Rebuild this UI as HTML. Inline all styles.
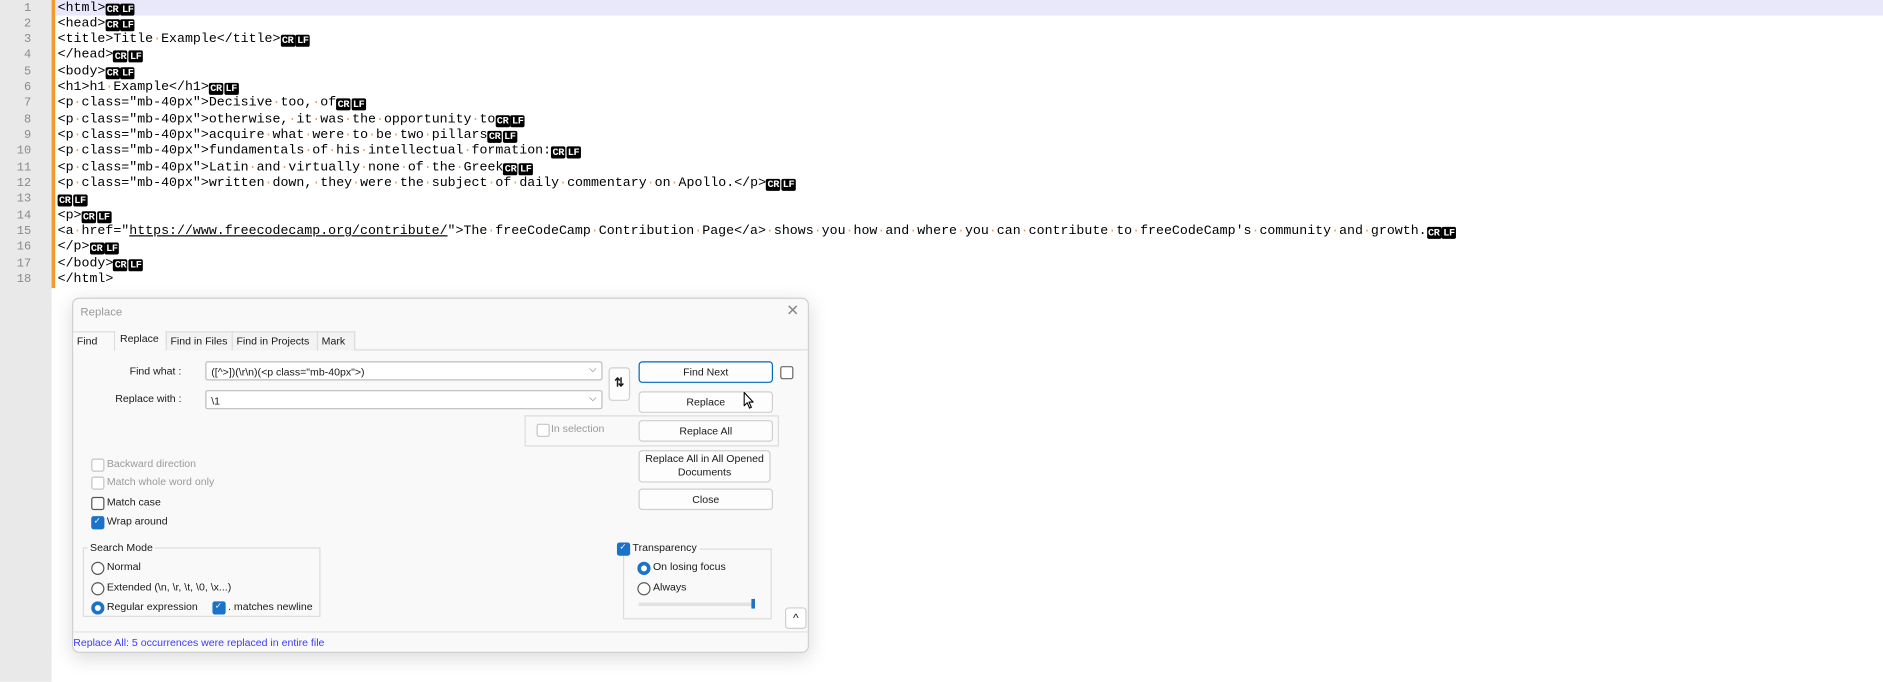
<!DOCTYPE html>
<html><head><meta charset="utf-8"><style>
html,body{margin:0;padding:0;width:1883px;height:681px;overflow:hidden;background:#fff}
#s{position:absolute;left:0;top:0;width:1569px;height:568px;transform:scale(1.2003);transform-origin:0 0;font-family:"Liberation Sans",sans-serif}
.g{position:absolute;left:0;top:0;width:43px;height:568px;background:#e9e9e9}
.ob{position:absolute;left:43px;top:0;width:3px;height:240px;background:#f39a2e}
.hl{position:absolute;left:46px;top:0;right:0;height:13.3px;background:#e8e8fa}
.ln{position:absolute;left:0;top:0.5px;width:26px;text-align:right;font:10px "Liberation Mono",monospace;color:#8a8a8a;line-height:13.33px}
.code{position:absolute;left:48px;top:0.5px;font:11.05px "Liberation Mono",monospace;line-height:13.33px;white-space:pre;color:#000}
.code i{font-style:normal;color:#e8a050}
.c{display:inline-block;width:12px;text-align:center;background:#000;color:#fff;font-size:8.5px;line-height:10px;border-radius:1.5px;margin-right:0.7px;vertical-align:-1px;font-weight:bold;letter-spacing:-0.3px}
.dlg{position:absolute;left:60px;top:248px;width:612px;height:294px;background:#f9f9f9;border:1px solid #d0d0d0;border-radius:6px;box-shadow:0 4px 16px rgba(0,0,0,.15);font-size:8.8px;color:#1a1a1a}
.a{position:absolute;white-space:nowrap}
.tab{position:absolute;top:27px;height:15px;border:1px solid #dcdcdc;border-bottom:none;background:#f3f3f3;line-height:15px;padding:0 3px}
.btn{position:absolute;left:471px;width:110px;height:16px;border:1px solid #cfcfcf;border-radius:3px;background:#fdfdfd;text-align:center;line-height:16px}
.inp{position:absolute;left:110px;height:16px;border:1px solid #bdbdbd;border-radius:2px;background:#fff;line-height:16px;padding-left:4px;box-sizing:border-box;width:331px}
.inp:after{content:"⌵";position:absolute;right:4px;top:-2px;color:#666;font-size:8px}
.cb{position:absolute;width:9px;height:9px;border:1px solid #555;border-radius:2px;background:#fff}
.cb.d{border-color:#c4c4c4}
.cb.k{background:#1a73c8;border-color:#1a73c8}
.cb.k:after{content:"✓";color:#fff;font-size:7px;position:absolute;left:1px;top:-1px}
.rd{position:absolute;width:9px;height:9px;border:1px solid #555;border-radius:50%;background:#fff}
.rd.k{border:3px solid #1a73c8;width:5px;height:5px}
.gb{position:absolute;border:1px solid #dcdcdc}
.dis{color:#9a9a9a}
</style></head><body><div id="s">
<div class="g"></div><div class="ob"></div><div class="hl"></div>
<div class="ln">1<br>2<br>3<br>4<br>5<br>6<br>7<br>8<br>9<br>10<br>11<br>12<br>13<br>14<br>15<br>16<br>17<br>18</div>
<div class="code">&lt;html&gt;<span class="c">CR</span><span class="c">LF</span>
&lt;head&gt;<span class="c">CR</span><span class="c">LF</span>
&lt;title&gt;Title<i>·</i>Example&lt;/title&gt;<span class="c">CR</span><span class="c">LF</span>
&lt;/head&gt;<span class="c">CR</span><span class="c">LF</span>
&lt;body&gt;<span class="c">CR</span><span class="c">LF</span>
&lt;h1&gt;h1<i>·</i>Example&lt;/h1&gt;<span class="c">CR</span><span class="c">LF</span>
&lt;p<i>·</i>class="mb-40px"&gt;Decisive<i>·</i>too,<i>·</i>of<span class="c">CR</span><span class="c">LF</span>
&lt;p<i>·</i>class="mb-40px"&gt;otherwise,<i>·</i>it<i>·</i>was<i>·</i>the<i>·</i>opportunity<i>·</i>to<span class="c">CR</span><span class="c">LF</span>
&lt;p<i>·</i>class="mb-40px"&gt;acquire<i>·</i>what<i>·</i>were<i>·</i>to<i>·</i>be<i>·</i>two<i>·</i>pillars<span class="c">CR</span><span class="c">LF</span>
&lt;p<i>·</i>class="mb-40px"&gt;fundamentals<i>·</i>of<i>·</i>his<i>·</i>intellectual<i>·</i>formation:<span class="c">CR</span><span class="c">LF</span>
&lt;p<i>·</i>class="mb-40px"&gt;Latin<i>·</i>and<i>·</i>virtually<i>·</i>none<i>·</i>of<i>·</i>the<i>·</i>Greek<span class="c">CR</span><span class="c">LF</span>
&lt;p<i>·</i>class="mb-40px"&gt;written<i>·</i>down,<i>·</i>they<i>·</i>were<i>·</i>the<i>·</i>subject<i>·</i>of<i>·</i>daily<i>·</i>commentary<i>·</i>on<i>·</i>Apollo.&lt;/p&gt;<span class="c">CR</span><span class="c">LF</span>
<span class="c">CR</span><span class="c">LF</span>
&lt;p&gt;<span class="c">CR</span><span class="c">LF</span>
&lt;a<i>·</i>href="<u>https://www.freecodecamp.org/contribute/</u>"&gt;The<i>·</i>freeCodeCamp<i>·</i>Contribution<i>·</i>Page&lt;/a&gt;<i>·</i>shows<i>·</i>you<i>·</i>how<i>·</i>and<i>·</i>where<i>·</i>you<i>·</i>can<i>·</i>contribute<i>·</i>to<i>·</i>freeCodeCamp's<i>·</i>community<i>·</i>and<i>·</i>growth.<span class="c">CR</span><span class="c">LF</span>
&lt;/p&gt;<span class="c">CR</span><span class="c">LF</span>
&lt;/body&gt;<span class="c">CR</span><span class="c">LF</span>
&lt;/html&gt;</div>

<div class="dlg">
<div class="a" style="left:6px;top:6px;color:#9a9a9a;font-size:9.5px">Replace</div>
<div class="a" style="left:594px;top:2px;color:#888;font-size:13px">✕</div>
<div class="a" style="left:0;top:42px;width:612px;border-top:1px solid #dcdcdc"></div>
<div class="tab" style="left:0px;width:28px;background:#f9f9f9;border-left:none">Find</div>
<div class="tab" style="left:35px;top:25px;height:17px;width:35px;background:#f9f9f9;border-color:#f9f9f9">Replace</div>
<div class="tab" style="left:77px;width:48px">Find in Files</div>
<div class="tab" style="left:132px;width:64px">Find in Projects</div>
<div class="tab" style="left:203px;width:24px">Mark</div>

<div class="a" style="left:47px;top:55px">Find what :</div>
<div class="inp" style="top:52px">([^&gt;])(\r\n)(&lt;p class="mb-40px"&gt;)</div>
<div class="a" style="left:35px;top:78px">Replace with :</div>
<div class="inp" style="top:76px">\1</div>
<div class="a" style="left:446px;top:57px;width:16px;height:26px;border:1px solid #d0d0d0;border-radius:3px;background:#fdfdfd;text-align:center;line-height:26px;font-weight:bold;font-size:10px">⇅</div>

<div class="btn" style="top:52px;border-color:#0067c0">Find Next</div>
<div class="cb" style="left:589px;top:56px;border-color:#666"></div>
<div class="btn" style="top:77px">Replace</div>
<svg class="a" style="left:558px;top:77px" width="10" height="15" viewBox="0 0 10 15"><path d="M1 1 L1 12 L3.5 9.5 L5.5 14 L7 13.3 L5 9 L8.5 9 Z" fill="#fff" stroke="#000" stroke-width="0.9" stroke-linejoin="round"/></svg>
<div class="gb" style="left:376px;top:97px;width:210px;height:24px"></div>
<div class="cb d" style="left:386px;top:104px"></div>
<div class="a dis" style="left:398px;top:103px">In selection</div>
<div class="btn" style="top:101px">Replace All</div>
<div class="btn" style="top:126px;line-height:11px;padding-top:1px;box-sizing:border-box;height:27px">Replace All in All Opened<br>Documents</div>
<div class="btn" style="top:158px">Close</div>

<div class="cb d" style="left:15px;top:133px"></div><div class="a dis" style="left:28px;top:132px">Backward direction</div>
<div class="cb d" style="left:15px;top:148px"></div><div class="a dis" style="left:28px;top:147px">Match whole word only</div>
<div class="cb" style="left:15px;top:165px"></div><div class="a" style="left:28px;top:164px">Match case</div>
<div class="cb k" style="left:15px;top:181px"></div><div class="a" style="left:28px;top:180px">Wrap around</div>

<div class="gb" style="left:8px;top:207px;width:196px;height:56px"></div>
<div class="a" style="left:12px;top:202px;background:#f9f9f9;padding:0 2px">Search Mode</div>
<div class="rd" style="left:15px;top:219px"></div><div class="a" style="left:28px;top:218px">Normal</div>
<div class="rd" style="left:15px;top:236px"></div><div class="a" style="left:28px;top:235px">Extended (\n, \r, \t, \0, \x...)</div>
<div class="rd k" style="left:15px;top:252px"></div><div class="a" style="left:28px;top:251px">Regular expression</div>
<div class="cb k" style="left:116px;top:252px"></div><div class="a" style="left:129px;top:251px">. matches newline</div>

<div class="gb" style="left:458px;top:208px;width:122px;height:57px"></div>
<div class="a" style="left:452px;top:201px;background:#f9f9f9;width:70px;height:12px"></div>
<div class="cb k" style="left:453px;top:203px"></div><div class="a" style="left:466px;top:202px">Transparency</div>
<div class="rd k" style="left:470px;top:219px"></div><div class="a" style="left:483px;top:218px">On losing focus</div>
<div class="rd" style="left:470px;top:236px"></div><div class="a" style="left:483px;top:235px">Always</div>
<div class="a" style="left:471px;top:253px;width:96px;height:3px;background:#e2e2e2"></div>
<div class="a" style="left:565px;top:250px;width:3px;height:8px;background:#1a73c8"></div>
<div class="a" style="left:593px;top:257px;width:16px;height:16px;border:1px solid #cfcfcf;border-radius:3px;background:#fff;text-align:center;line-height:17px;font-size:10px">^</div>

<div class="a" style="left:0;top:277px;width:612px;border-top:1px solid #e4e4e4"></div>
<div class="a" style="left:0px;top:281px;color:#3b3bff">Replace All: 5 occurrences were replaced in entire file</div>
</div>
</div></body></html>
